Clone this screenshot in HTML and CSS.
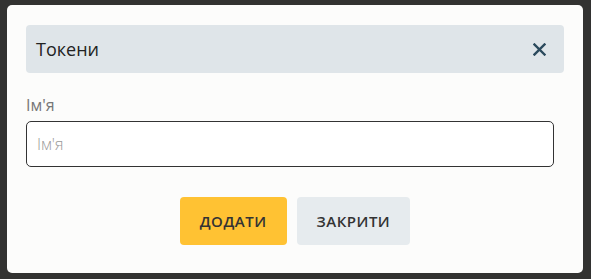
FILE: index.html
```html
<!DOCTYPE html>
<html>
<head>
<meta name="viewport" content="width=device-width, initial-scale=1">
<link rel="stylesheet" href="styles.css">
</head>
<body>

<div class="modal">
    <div class="modal-header">
        <span class="modal-title">Токени</span>
        <span class="closeBtn">
            <svg width="13" height="13" viewBox="0 0 13 13">
                <path d="M1.5 1.5 L11.5 11.5 M11.5 1.5 L1.5 11.5" stroke="#2b4a5d" stroke-width="2.4" stroke-linecap="square"/>
            </svg>
        </span>
    </div>

    <div class="form-group">
        <label for="nameInput">Ім'я</label>
        <input type="text" id="nameInput" placeholder="Ім'я">
    </div>

    <div class="modal-footer">
        <span class="addBtn">Додати</span>
        <span class="cancelBtn">Закрити</span>
    </div>
</div>

</body>
</html>
```

FILE: styles.css
```css
/* Page behind the modal */
body {
    margin: 0;
    padding: 5px 8px 0 7px;
    background: #323231;
    font-family: "Open Sans", sans-serif;
    color: #333;
}

* {
    box-sizing: border-box;
}

/* The modal window */
.modal {
    background: #fcfcfb;
    border-radius: 5px;
    padding: 20px 19px 28px 19px;
    height: 268px;
}

/* Header bar */
.modal-header {
    display: flex;
    align-items: center;
    justify-content: space-between;
    height: 48px;
    padding: 0 18px 0 10px;
    background: #dfe5e9;
    border-radius: 4px;
}

.modal-title {
    font-size: 18px;
    color: #222;
}

.closeBtn {
    display: flex;
    cursor: pointer;
}

/* Form */
.form-group {
    margin-top: 22px;
    margin-right: 10px;
}

label {
    display: block;
    font-size: 16px;
    line-height: 20px;
    color: #777;
    margin-bottom: 6px;
}

input {
    display: block;
    width: 100%;
    height: 46px;
    margin: 0;
    padding: 0 10px;
    border: 1px solid #333;
    border-radius: 5px;
    background: #fff;
    font-family: "Open Sans", sans-serif;
    font-size: 16px;
    font-weight: 300;
}

input::placeholder {
    color: #999;
}

/* Buttons */
.modal-footer {
    display: flex;
    justify-content: center;
    gap: 10px;
    margin-top: 30px;
}

.addBtn,
.cancelBtn {
    display: flex;
    align-items: center;
    height: 48px;
    padding: 0 20px;
    border-radius: 4px;
    font-size: 15px;
    font-weight: 600;
    text-transform: uppercase;
    letter-spacing: 0.5px;
    color: #333;
    cursor: pointer;
}

.addBtn {
    background: #ffc233;
}

.cancelBtn {
    background: #e6ebee;
}
```
